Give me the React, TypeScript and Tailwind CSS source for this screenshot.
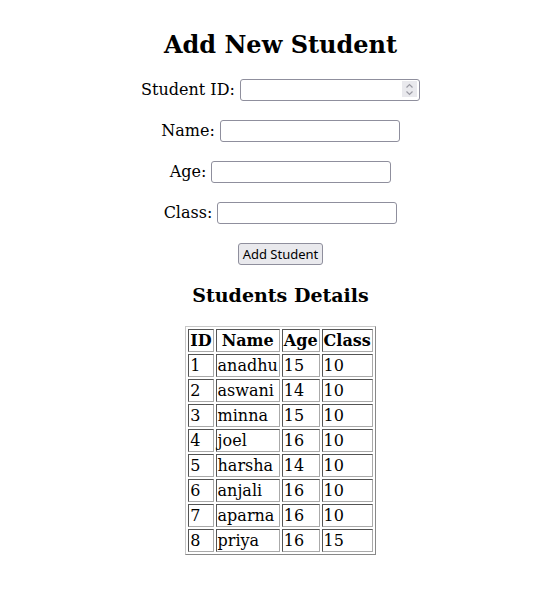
import React from "react";

const students = [
  { id: 1, name: "anadhu", age: 15, cls: 10 },
  { id: 2, name: "aswani", age: 14, cls: 10 },
  { id: 3, name: "minna", age: 15, cls: 10 },
  { id: 4, name: "joel", age: 16, cls: 10 },
  { id: 5, name: "harsha", age: 14, cls: 10 },
  { id: 6, name: "anjali", age: 16, cls: 10 },
  { id: 7, name: "aparna", age: 16, cls: 10 },
  { id: 8, name: "priya", age: 16, cls: 15 },
];

const inputCls =
  "w-[180px] h-[22px] border border-[#8f8f9d] rounded-[3px] bg-white px-[2px] text-[13px] [font-family:'Noto_Sans',sans-serif]";

const cellCls =
  "border border-t-[#555] border-l-[#555] border-b-[#aaa] border-r-[#aaa] px-[1px] py-[1px] leading-[19px] text-left";

const thCls =
  "border border-t-[#555] border-l-[#555] border-b-[#aaa] border-r-[#aaa] px-[1px] py-[1px] leading-[19px] text-center font-bold";

const App: React.FC = () => {
  return (
    <div className="flex flex-col items-center pl-[4px] text-[16px] text-black bg-white min-h-[601px] [font-family:'DejaVu_Serif',serif]">
      <h1 className="mt-[27px] text-[24px] font-bold leading-[36px]">Add New Student</h1>

      <form className="flex flex-col items-center mt-[16px]">
        <div className="flex items-center gap-[5px] h-[22px]">
          <label>Student ID:</label>
          <div className="relative">
            <input type="text" className={inputCls} />
            {/* spinner */}
            <div className="absolute right-[3px] top-[3px] w-[15px] h-[16px] bg-[#e9e9ed] flex flex-col items-center justify-center">
              <svg width="9" height="13" viewBox="0 0 9 13" fill="none" stroke="#9a9aa3" strokeWidth="1.2">
                <path d="M1.5 4.5 L4.5 1.5 L7.5 4.5" />
                <path d="M1.5 8.5 L4.5 11.5 L7.5 8.5" />
              </svg>
            </div>
          </div>
        </div>
        <div className="flex items-center gap-[5px] h-[22px] mt-[19px]">
          <label>Name:</label>
          <input type="text" className={inputCls} />
        </div>
        <div className="flex items-center gap-[5px] h-[22px] mt-[19px]">
          <label>Age:</label>
          <input type="text" className={inputCls} />
        </div>
        <div className="flex items-center gap-[5px] h-[22px] mt-[19px]">
          <label>Class:</label>
          <input type="text" className={inputCls} />
        </div>
        <button
          type="button"
          className="mt-[19px] h-[22px] px-[4px] border border-[#8f8f9d] rounded-[3px] bg-[#e9e9ed] text-[13px] leading-[18px] [font-family:'Noto_Sans',sans-serif]"
        >
          Add Student
        </button>
      </form>

      <h2 className="mt-[18px] text-[19px] font-bold leading-[24px]">Students Details</h2>

      <table className="mt-[19px] border-separate border-spacing-[2px] border border-t-[#c8c8c8] border-l-[#c8c8c8] border-b-[#888] border-r-[#888]">
        <thead>
          <tr>
            <th className={thCls}>ID</th>
            <th className={thCls}>Name</th>
            <th className={thCls}>Age</th>
            <th className={thCls}>Class</th>
          </tr>
        </thead>
        <tbody>
          {students.map((s) => (
            <tr key={s.id}>
              <td className={cellCls}>{s.id}</td>
              <td className={cellCls}>{s.name}</td>
              <td className={cellCls}>{s.age}</td>
              <td className={cellCls}>{s.cls}</td>
            </tr>
          ))}
        </tbody>
      </table>
    </div>
  );
};

export default App;
